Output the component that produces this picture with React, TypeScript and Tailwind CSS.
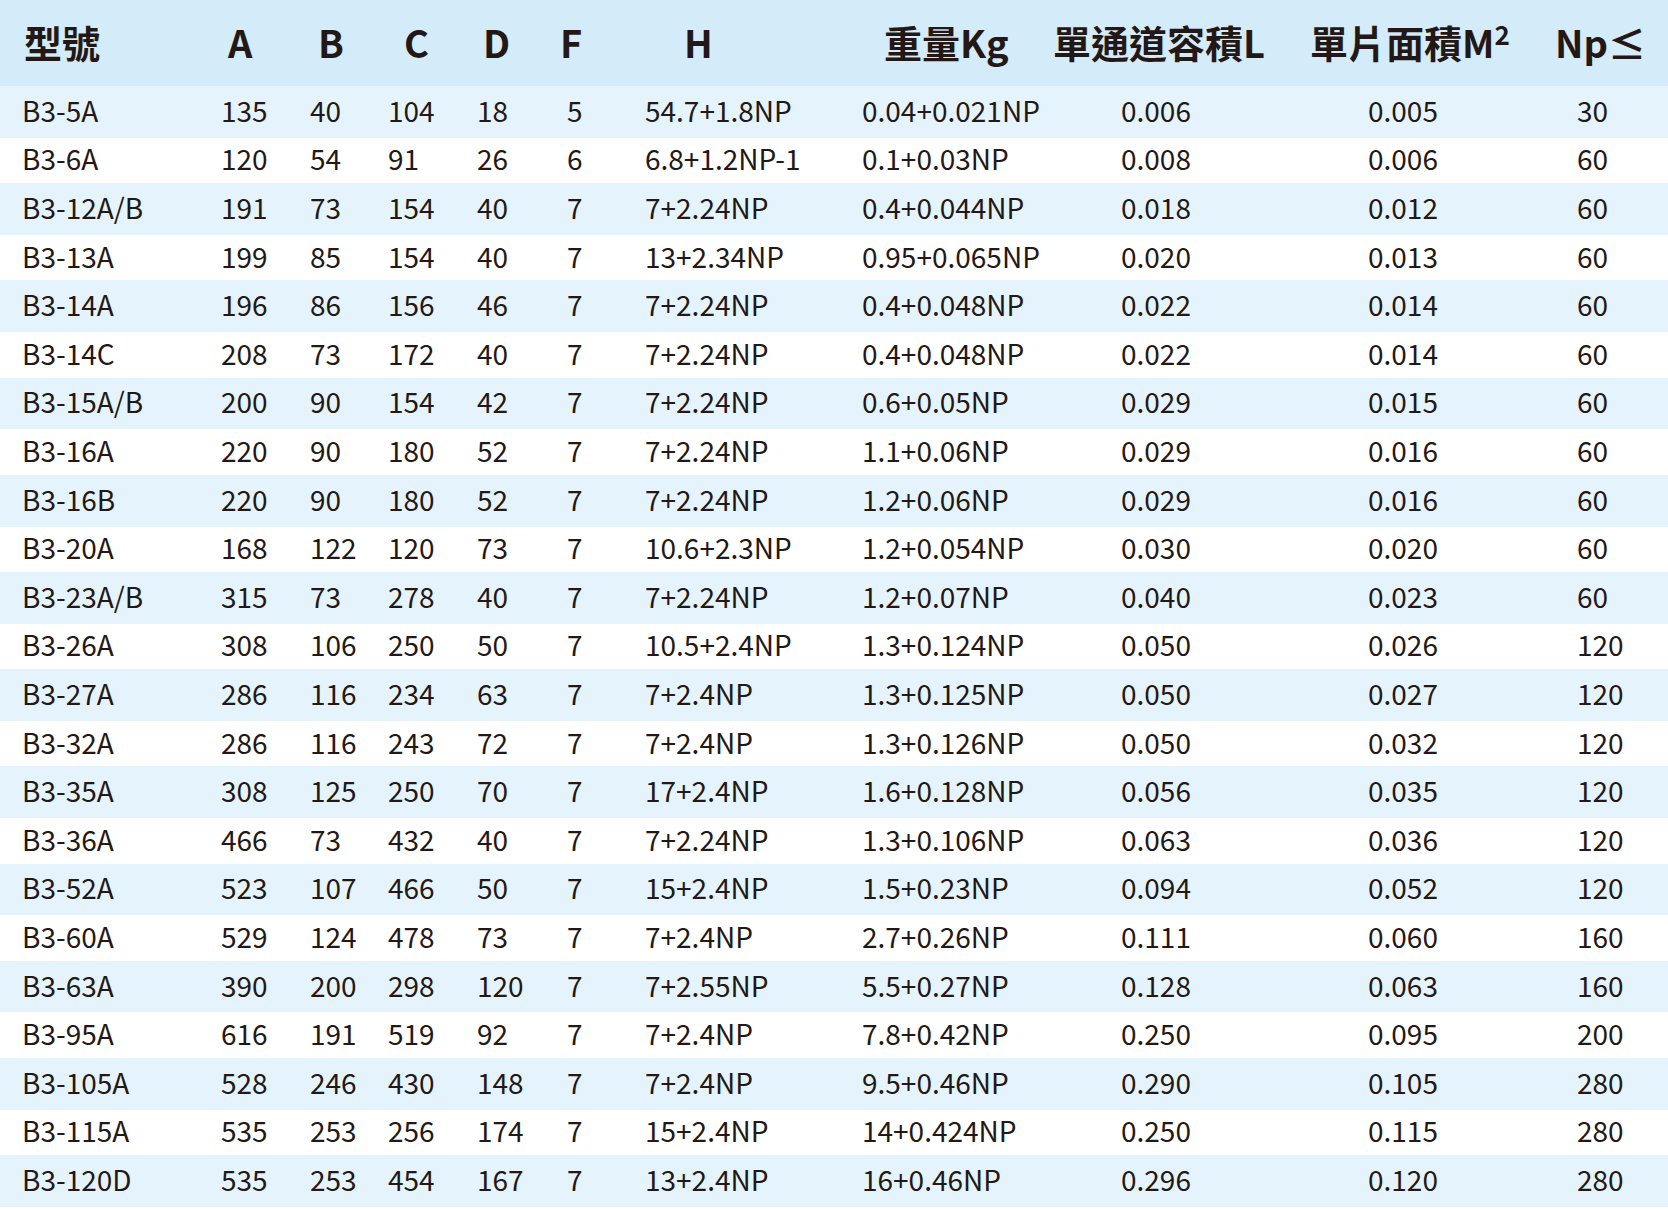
import React from "react";

const rows: string[][] = [
  ["B3-5A", "135", "40", "104", "18", "5", "54.7+1.8NP", "0.04+0.021NP", "0.006", "0.005", "30"],
  ["B3-6A", "120", "54", "91", "26", "6", "6.8+1.2NP-1", "0.1+0.03NP", "0.008", "0.006", "60"],
  ["B3-12A/B", "191", "73", "154", "40", "7", "7+2.24NP", "0.4+0.044NP", "0.018", "0.012", "60"],
  ["B3-13A", "199", "85", "154", "40", "7", "13+2.34NP", "0.95+0.065NP", "0.020", "0.013", "60"],
  ["B3-14A", "196", "86", "156", "46", "7", "7+2.24NP", "0.4+0.048NP", "0.022", "0.014", "60"],
  ["B3-14C", "208", "73", "172", "40", "7", "7+2.24NP", "0.4+0.048NP", "0.022", "0.014", "60"],
  ["B3-15A/B", "200", "90", "154", "42", "7", "7+2.24NP", "0.6+0.05NP", "0.029", "0.015", "60"],
  ["B3-16A", "220", "90", "180", "52", "7", "7+2.24NP", "1.1+0.06NP", "0.029", "0.016", "60"],
  ["B3-16B", "220", "90", "180", "52", "7", "7+2.24NP", "1.2+0.06NP", "0.029", "0.016", "60"],
  ["B3-20A", "168", "122", "120", "73", "7", "10.6+2.3NP", "1.2+0.054NP", "0.030", "0.020", "60"],
  ["B3-23A/B", "315", "73", "278", "40", "7", "7+2.24NP", "1.2+0.07NP", "0.040", "0.023", "60"],
  ["B3-26A", "308", "106", "250", "50", "7", "10.5+2.4NP", "1.3+0.124NP", "0.050", "0.026", "120"],
  ["B3-27A", "286", "116", "234", "63", "7", "7+2.4NP", "1.3+0.125NP", "0.050", "0.027", "120"],
  ["B3-32A", "286", "116", "243", "72", "7", "7+2.4NP", "1.3+0.126NP", "0.050", "0.032", "120"],
  ["B3-35A", "308", "125", "250", "70", "7", "17+2.4NP", "1.6+0.128NP", "0.056", "0.035", "120"],
  ["B3-36A", "466", "73", "432", "40", "7", "7+2.24NP", "1.3+0.106NP", "0.063", "0.036", "120"],
  ["B3-52A", "523", "107", "466", "50", "7", "15+2.4NP", "1.5+0.23NP", "0.094", "0.052", "120"],
  ["B3-60A", "529", "124", "478", "73", "7", "7+2.4NP", "2.7+0.26NP", "0.111", "0.060", "160"],
  ["B3-63A", "390", "200", "298", "120", "7", "7+2.55NP", "5.5+0.27NP", "0.128", "0.063", "160"],
  ["B3-95A", "616", "191", "519", "92", "7", "7+2.4NP", "7.8+0.42NP", "0.250", "0.095", "200"],
  ["B3-105A", "528", "246", "430", "148", "7", "7+2.4NP", "9.5+0.46NP", "0.290", "0.105", "280"],
  ["B3-115A", "535", "253", "256", "174", "7", "15+2.4NP", "14+0.424NP", "0.250", "0.115", "280"],
  ["B3-120D", "535", "253", "454", "167", "7", "13+2.4NP", "16+0.46NP", "0.296", "0.120", "280"],
];

export default function App() {
  return (
    <div
      className="w-[1668px] h-[1210px] bg-white text-[#231815] overflow-hidden"
      style={{ fontFamily: '"Noto Sans CJK TC", "Noto Sans", sans-serif' }}
    >
      <div className="h-[86px] bg-[#d4ebf9] pl-[24px] pb-[3px] grid grid-cols-[204px_90px_86px_79px_77px_124px_200px_169px_257px_245px_1fr] items-center text-[38px] font-bold leading-none">
        <div>型號</div>
        <div>A</div>
        <div>B</div>
        <div>C</div>
        <div>D</div>
        <div>F</div>
        <div>H</div>
        <div>重量Kg</div>
        <div>單通道容積L</div>
        <div>
          單片面積M<span className="relative -top-[13px] text-[26px]">2</span>
        </div>
        <div>Np≤</div>
      </div>
      {rows.map((r, i) => (
        <div
          key={r[0]}
          className={
            i % 2 === 0
              ? "h-[51.8px] bg-[#e5f4fc] pl-[22px] pb-[4px] grid grid-cols-[199px_89px_78px_89px_90px_78px_217px_259px_247px_209px_1fr] items-center text-[28px] leading-none"
              : "h-[45.4px] bg-white pl-[22px] pb-[4px] grid grid-cols-[199px_89px_78px_89px_90px_78px_217px_259px_247px_209px_1fr] items-center text-[28px] leading-none"
          }
        >
          {r.map((c, j) => (
            <div key={j} className="whitespace-nowrap">
              {c}
            </div>
          ))}
        </div>
      ))}
    </div>
  );
}
